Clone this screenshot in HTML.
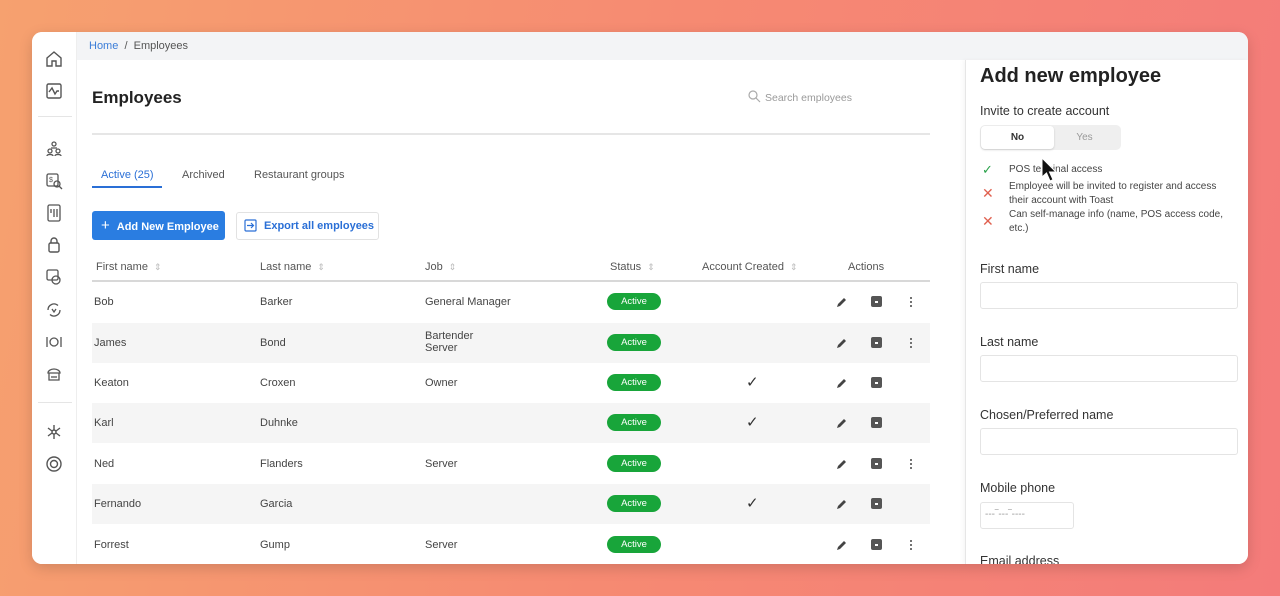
<!DOCTYPE html>
<html><head><meta charset="utf-8"><style>
*{box-sizing:border-box;margin:0;padding:0}
body{width:1280px;height:596px;overflow:hidden;font-family:"Liberation Sans",sans-serif;background:linear-gradient(100deg,#f6a16f 0%,#f68a72 50%,#f47b7a 100%);position:relative;color:#333}
.win{position:absolute;left:32px;top:32px;width:1216px;height:532px;background:#fff;border-radius:10px;overflow:hidden;box-shadow:0 4px 14px rgba(0,0,0,.15)}
.a{position:absolute}
.side{left:0;top:0;width:45px;height:532px;border-right:1px solid #eee;background:#fff}
.crumb{left:45px;top:0;right:0;height:28px;background:#f3f4f6;font-size:11px;color:#555;padding:8px 12px}
.crumb b{color:#3b7dd8;font-weight:normal}
.ic{position:absolute;left:13px;width:18px;height:18px}
.th{position:absolute;top:229px;font-size:11px;color:#555}
.th i{font-style:normal;color:#bbb;font-size:9px;margin-left:6px}
.row{position:absolute;left:60px;width:838px;height:40px;font-size:11px;color:#444}
.row span{position:absolute;top:14px}
.g{background:#f5f5f5}
.pill{position:absolute;left:515px;top:11px;width:54px;height:17px;border-radius:9px;background:#18a53a;color:#fff;font-size:9.5px;text-align:center;line-height:17px}
.chk{position:absolute;left:654px;top:10px;font-size:15px;color:#333}
.pen{position:absolute;left:744px;top:14px}
.arc{position:absolute;left:779px;top:14px;width:11px;height:11px;background:#555;border-radius:2px}
.arc:after{content:"";position:absolute;left:4px;top:5px;width:3px;height:2px;background:#fff}
.dots{position:absolute;left:818px;top:14px;width:2px;height:12px;background:radial-gradient(circle,#666 1px,transparent 1.2px) 0 0/2px 4px}
.lbl{position:absolute;left:948px;font-size:12.5px;color:#333}
.inp{position:absolute;left:948px;width:258px;height:27px;border:1px solid #e4e4e4;border-radius:3px}
</style></head><body>
<div class="win">
 <div class="a side">
  <svg class="ic" style="top:18px" viewBox="0 0 18 18" fill="none" stroke="#555" stroke-width="1.4"><path d="M2 8L9 2l7 6v8H11v-5H7v5H2z"/></svg>
  <svg class="ic" style="top:50px" viewBox="0 0 18 18" fill="none" stroke="#555" stroke-width="1.4"><rect x="2" y="2" width="14" height="14" rx="1.5"/><path d="M4 10l3-4 3 6 2-3h2"/></svg>
  <div class="a" style="left:6px;top:84px;width:34px;height:1px;background:#e5e5e5"></div>
  <svg class="ic" style="top:108px" viewBox="0 0 18 18" fill="none" stroke="#555" stroke-width="1.3"><circle cx="9" cy="4" r="2"/><circle cx="5" cy="11" r="2"/><circle cx="13" cy="11" r="2"/><path d="M2 16c0-2 6-2 6 0M10 16c0-2 6-2 6 0M6 8h6"/></svg>
  <svg class="ic" style="top:140px" viewBox="0 0 18 18" fill="none" stroke="#555" stroke-width="1.3"><rect x="2" y="2" width="11" height="12" rx="1.5"/><circle cx="12" cy="12" r="3"/><path d="M14 14l3 3"/><text x="4" y="10" font-size="7" fill="#555" stroke="none">$</text></svg>
  <svg class="ic" style="top:172px" viewBox="0 0 18 18" fill="none" stroke="#555" stroke-width="1.3"><rect x="3" y="1" width="12" height="16" rx="1.5"/><path d="M6 5v4M9 5v8M12 5v8M6 9h0"/></svg>
  <svg class="ic" style="top:204px" viewBox="0 0 18 18" fill="none" stroke="#555" stroke-width="1.4"><rect x="4" y="7" width="10" height="9" rx="1.5"/><path d="M6 7V5a3 3 0 016 0v2"/></svg>
  <svg class="ic" style="top:236px" viewBox="0 0 18 18" fill="none" stroke="#555" stroke-width="1.3"><rect x="2" y="2" width="11" height="10" rx="1.5"/><circle cx="11" cy="12" r="4"/></svg>
  <svg class="ic" style="top:269px" viewBox="0 0 18 18" fill="none" stroke="#555" stroke-width="1.3"><path d="M3 9a6 6 0 0110-4.5M15 9a6 6 0 01-10 4.5"/><path d="M7 8l2 3 2-3"/></svg>
  <svg class="ic" style="top:301px" viewBox="0 0 18 18" fill="none" stroke="#555" stroke-width="1.3"><path d="M2 4v10M16 4v10"/><circle cx="9" cy="9" r="4"/></svg>
  <svg class="ic" style="top:333px" viewBox="0 0 18 18" fill="none" stroke="#555" stroke-width="1.3"><path d="M3 8a6 4 0 0112 0zM4 8v7h10V8"/><path d="M6 12h6"/></svg>
  <div class="a" style="left:6px;top:370px;width:34px;height:1px;background:#e5e5e5"></div>
  <svg class="ic" style="top:391px" viewBox="0 0 18 18" fill="none" stroke="#555" stroke-width="1.4"><circle cx="9" cy="9" r="2"/><path d="M9 7V2M9 11v5M7 8L3 5M11 8l4-3M7 10l-4 3M11 10l4 3"/></svg>
  <svg class="ic" style="top:423px" viewBox="0 0 18 18" fill="none" stroke="#555" stroke-width="1.4"><circle cx="9" cy="9" r="7"/><circle cx="9" cy="9" r="3.5"/></svg>
 </div>
 <div class="a crumb"><b>Home</b> &nbsp;/&nbsp; Employees</div>
 <div class="a" style="left:60px;top:56px;font-size:17px;font-weight:bold;color:#222">Employees</div>
 <svg class="a" style="left:716px;top:58px" width="13" height="13" viewBox="0 0 13 13" fill="none" stroke="#aaa" stroke-width="1.2"><circle cx="5" cy="5" r="4"/><path d="M8 8l4 4"/></svg>
 <div class="a" style="left:733px;top:60px;font-size:10.5px;color:#999">Search employees</div>
 <div class="a" style="left:60px;top:101px;width:838px;height:2px;background:#e6e6e6"></div>
 <div class="a" style="left:69px;top:137px;font-size:11px;color:#2a6fd6">Active (25)</div>
 <div class="a" style="left:60px;top:154px;width:70px;height:2px;background:#2a6fd6"></div>
 <div class="a" style="left:150px;top:137px;font-size:11px;color:#555">Archived</div>
 <div class="a" style="left:222px;top:137px;font-size:11px;color:#555">Restaurant groups</div>
 <div class="a" style="left:60px;top:179px;width:133px;height:29px;background:#2a7de1;border-radius:3px;color:#fff;font-size:11px;font-weight:bold;line-height:29px;padding-left:9px"><span style="font-size:15px;font-weight:normal;margin-right:7px">+</span>Add New Employee</div>
 <div class="a" style="left:204px;top:180px;width:143px;height:28px;border:1px solid #e2e2e2;border-radius:3px;color:#2a6fd6;font-size:11px;font-weight:bold;line-height:26px;padding-left:27px">Export all employees</div>
 <svg class="a" style="left:212px;top:187px" width="13" height="13" viewBox="0 0 13 13" fill="none" stroke="#2a6fd6" stroke-width="1.2"><rect x="1" y="1" width="11" height="11" rx="1"/><path d="M3 6.5h6M7 4l2.5 2.5L7 9"/></svg>
 <div class="th" style="left:64px">First name<i>⇕</i></div>
 <div class="th" style="left:228px">Last name<i>⇕</i></div>
 <div class="th" style="left:393px">Job<i>⇕</i></div>
 <div class="th" style="left:578px">Status<i>⇕</i></div>
 <div class="th" style="left:670px">Account Created<i>⇕</i></div>
 <div class="th" style="left:816px">Actions</div>
 <div class="a" style="left:60px;top:248px;width:838px;height:2px;background:#d8d8d8"></div>

 <div class="row" style="top:250px"><span style="left:2px">Bob</span><span style="left:168px">Barker</span><span style="left:333px">General Manager</span><div class="pill">Active</div><svg class="pen" width="12" height="12" viewBox="0 0 12 12"><path d="M1 11l1-3 6-6 2 2-6 6z" fill="#444"/></svg><div class="arc"></div><div class="dots"></div></div>
 <div class="row g" style="top:291px"><span style="left:2px">James</span><span style="left:168px">Bond</span><span style="left:333px;top:7px;line-height:12px">Bartender<br>Server</span><div class="pill">Active</div><svg class="pen" width="12" height="12" viewBox="0 0 12 12"><path d="M1 11l1-3 6-6 2 2-6 6z" fill="#444"/></svg><div class="arc"></div><div class="dots"></div></div>
 <div class="row" style="top:331px"><span style="left:2px">Keaton</span><span style="left:168px">Croxen</span><span style="left:333px">Owner</span><div class="pill">Active</div><div class="chk">✓</div><svg class="pen" width="12" height="12" viewBox="0 0 12 12"><path d="M1 11l1-3 6-6 2 2-6 6z" fill="#444"/></svg><div class="arc"></div></div>
 <div class="row g" style="top:371px"><span style="left:2px">Karl</span><span style="left:168px">Duhnke</span><div class="pill">Active</div><div class="chk">✓</div><svg class="pen" width="12" height="12" viewBox="0 0 12 12"><path d="M1 11l1-3 6-6 2 2-6 6z" fill="#444"/></svg><div class="arc"></div></div>
 <div class="row" style="top:412px"><span style="left:2px">Ned</span><span style="left:168px">Flanders</span><span style="left:333px">Server</span><div class="pill">Active</div><svg class="pen" width="12" height="12" viewBox="0 0 12 12"><path d="M1 11l1-3 6-6 2 2-6 6z" fill="#444"/></svg><div class="arc"></div><div class="dots"></div></div>
 <div class="row g" style="top:452px"><span style="left:2px">Fernando</span><span style="left:168px">Garcia</span><div class="pill">Active</div><div class="chk">✓</div><svg class="pen" width="12" height="12" viewBox="0 0 12 12"><path d="M1 11l1-3 6-6 2 2-6 6z" fill="#444"/></svg><div class="arc"></div></div>
 <div class="row" style="top:493px"><span style="left:2px">Forrest</span><span style="left:168px">Gump</span><span style="left:333px">Server</span><div class="pill">Active</div><svg class="pen" width="12" height="12" viewBox="0 0 12 12"><path d="M1 11l1-3 6-6 2 2-6 6z" fill="#444"/></svg><div class="arc"></div><div class="dots"></div></div>

 <div class="a" style="left:933px;top:28px;width:283px;height:504px;border-left:1px solid #e6e6e6;box-shadow:-2px 0 4px rgba(0,0,0,.04);background:#fff"></div>
 <div class="a" style="left:948px;top:33px;font-size:20px;font-weight:bold;color:#222">Add new employee</div>
 <div class="lbl" style="top:72px">Invite to create account</div>
 <div class="a" style="left:948px;top:93px;width:141px;height:25px;background:#efefef;border-radius:5px"></div>
 <div class="a" style="left:949px;top:94px;width:73px;height:23px;background:#fff;border-radius:4px;box-shadow:0 1px 2px rgba(0,0,0,.15);font-size:10px;font-weight:bold;text-align:center;line-height:23px">No</div>
 <div class="a" style="left:1030px;top:94px;width:45px;font-size:10px;color:#999;text-align:center;line-height:23px">Yes</div>
 <div class="a" style="left:950px;top:130px;color:#2aa24a;font-size:13px">✓</div>
 <div class="a" style="left:950px;top:153px;color:#e0604f;font-size:14px">✕</div>
 <div class="a" style="left:950px;top:181px;color:#e0604f;font-size:14px">✕</div>
 <div class="a" style="left:977px;top:131px;width:226px;font-size:10px;line-height:14px;color:#444">POS terminal access</div>
 <div class="a" style="left:977px;top:148px;width:226px;font-size:10px;line-height:14px;color:#444">Employee will be invited to register and access their account with Toast</div>
 <div class="a" style="left:977px;top:176px;width:226px;font-size:10px;line-height:14px;color:#444">Can self-manage info (name, POS access code, etc.)</div>
 <svg class="a" style="left:1008px;top:125px" width="18" height="26" viewBox="0 0 18 26"><path d="M2 1v19l4.5-4 3.5 8 3-1.3-3.5-7.7H16z" fill="#111" stroke="#fff" stroke-width="1"/></svg>
 <div class="lbl" style="top:230px">First name</div><div class="inp" style="top:250px"></div>
 <div class="lbl" style="top:303px">Last name</div><div class="inp" style="top:323px"></div>
 <div class="lbl" style="top:376px">Chosen/Preferred name</div><div class="inp" style="top:396px"></div>
 <div class="lbl" style="top:449px">Mobile phone</div><div class="inp" style="top:470px;width:94px;font-size:10px;color:#999;padding:6px 4px">---‾---‾----</div>
 <div class="lbl" style="top:522px">Email address</div>
</div>
</body></html>
